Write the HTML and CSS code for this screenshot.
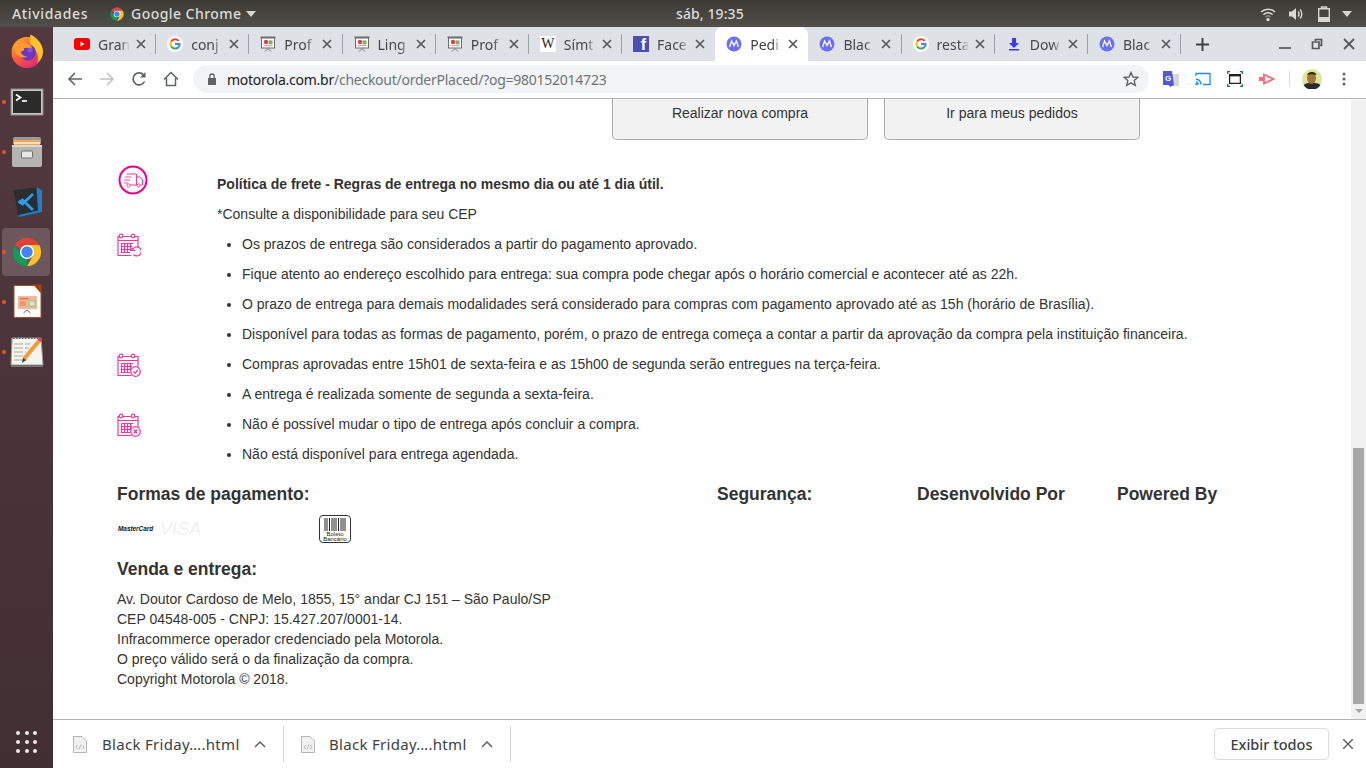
FILE: index.html
```html
<!DOCTYPE html>
<html lang="pt-BR">
<head>
<meta charset="utf-8">
<title>Pedido</title>
<link rel="stylesheet" href="styles.css">
</head>
<body>
<svg class="defs" width="0" height="0">
  <defs>
    <symbol id="chrome" viewBox="0 0 48 48">
      <path fill="#db4437" d="M24 24 6.7 14A20 20 0 0 1 41.3 14H24Z"/>
      <path fill="#0f9d58" d="M24 44A20 20 0 0 1 6.7 14L15.3 29 24 24l-.1 0L24 44Z"/>
      <path fill="#fbc02d" d="M41.3 14A20 20 0 0 1 24 44L32.7 29 24 24V14Z"/>
      <circle cx="24" cy="24" r="10" fill="#fff"/>
      <circle cx="24" cy="24" r="8" fill="#4285f4"/>
    </symbol>
    <symbol id="moto" viewBox="0 0 16 16">
      <circle cx="8" cy="8" r="7.5" fill="#6c6ff2"/>
      <path fill="none" stroke="#fff" stroke-width="1.300" d="M3.600 11 5.600 5 8 9.600 10.400 5 12.400 11"/>
    </symbol>
    <symbol id="google" viewBox="0 0 16 16">
      <circle cx="8" cy="8" r="8" fill="#fff"/>
      <path fill="none" stroke="#ea4335" stroke-width="2" d="M11.600 4.900A4.600 4.600 0 0 0 4.200 5.600"/>
      <path fill="none" stroke="#fbbc05" stroke-width="2" d="M4.200 5.600a4.600 4.600 0 0 0 0 4.800"/>
      <path fill="none" stroke="#34a853" stroke-width="2" d="M4.200 10.400a4.600 4.600 0 0 0 7.400.6"/>
      <path fill="none" stroke="#4285f4" stroke-width="2" d="M8 8h4.600a4.600 4.600 0 0 1-1 3"/>
    </symbol>
    <symbol id="slide" viewBox="0 0 16 16">
      <rect x="0.500" y="0.500" width="15" height="1.600" fill="#6a6a6a"/>
      <rect x="1.500" y="2" width="13" height="10" fill="#fff" stroke="#6a6a6a"/>
      <circle cx="6" cy="6" r="2.200" fill="#d9434e"/>
      <rect x="8.500" y="4.400" width="4" height="4" fill="#7fb069"/>
      <rect x="3.500" y="9.200" width="9" height="1" fill="#e88d8d"/>
      <path fill="none" stroke="#777" d="M5 15.500 8 12.500 11 15.500"/>
    </symbol>
    <symbol id="close" viewBox="0 0 10 10">
      <path fill="none" stroke="currentColor" stroke-width="1.700" d="M1 1 9 9M9 1 1 9"/>
    </symbol>
    <symbol id="cal" viewBox="0 0 24 24">
      <path fill="none" stroke="#f0389c" stroke-width="1.200" d="M2.500 3.500H1V22.500H14M6 3.500H14M18 3.500H21V14M1 7.500H21"/>
      <circle cx="4" cy="3" r="1.800" fill="#fff" stroke="#f0389c" stroke-width="1.200"/>
      <circle cx="16" cy="3" r="1.800" fill="#fff" stroke="#f0389c" stroke-width="1.200"/>
      <path fill="none" stroke="#f0389c" stroke-width="1.200" d="M4.500 10.500H16M4.500 13.500H15M4.500 16.500H13M4.500 19.500H13M4.500 10.500V20M7.500 10.500V20M10.500 10.500V20M13.500 10.500V18"/>
    </symbol>
  </defs>
</svg>

<div class="desktop">
  <header class="topbar">
    <div class="topbar-left">
      <span class="gnome-label gnome-activities">Atividades</span>
      <svg class="top-chrome"><use href="#chrome"/></svg>
      <span class="gnome-label">Google Chrome</span>
      <span class="top-caret"></span>
    </div>
    <div class="clock">sáb, 19:35</div>
    <div class="tray">
      <svg class="tray-icon" viewBox="0 0 16 16"><path fill="none" stroke="#d8d6d0" stroke-width="1.500" d="M1 6a10 10 0 0 1 14 0M3.400 8.600a6.600 6.600 0 0 1 9.200 0"/><path fill="none" stroke="#8d8b85" stroke-width="1.500" d="M5.600 11a3.400 3.400 0 0 1 4.800 0"/><circle cx="8" cy="13.600" r="1.600" fill="#e6e4de"/></svg>
      <svg class="tray-icon" viewBox="0 0 16 16"><path fill="#d8d6d0" d="M1 5.500H4L8 2V14L4 10.500H1Z"/><path fill="none" stroke="#d8d6d0" stroke-width="1.400" d="M10 5.500a3.500 3.500 0 0 1 0 5M12 3.500a6.500 6.500 0 0 1 0 9"/></svg>
      <svg class="tray-icon" viewBox="0 0 16 16"><path fill="none" stroke="#d8d6d0" stroke-width="1.400" d="M2.700 2.700H13.300V15.300H2.700ZM5.500 2.500V1H10.500V2.500"/><rect x="2.700" y="11" width="10.600" height="4.300" fill="#d8d6d0"/></svg>
      <span class="top-caret"></span>
    </div>
  </header>

  <div class="shell">
    <nav class="dock">
      <div class="dock-item">
        <svg class="dock-icon" viewBox="0 0 36 36">
          <defs>
            <linearGradient id="ff" x1=".1" y1=".1" x2=".7" y2="1"><stop offset="0" stop-color="#ffa62e"/><stop offset=".5" stop-color="#ff5a3c"/><stop offset="1" stop-color="#db2a78"/></linearGradient>
          </defs>
          <circle cx="18" cy="18.500" r="15.500" fill="url(#ff)"/>
          <path fill="#ffc22f" d="M21.500 .5c6 3 12.500 9 12.500 17 0 5-2.500 9-6 11.500 2.500-6 .5-12-5-15-2-4-3-9-1.500-13.500Z"/>
          <circle cx="19" cy="18.500" r="8" fill="#6d37bd"/>
          <path fill="#ff9a2e" d="M5 11c4-3 11-3 15-.5 2 1 3 2.500 3 3.500h-8c1 2-1 3.500-3.500 3.500 1 3 4 5.500 7.500 5-4 2.500-11 .5-13-5-1-2.500-1.500-4.500-1-6.500Z"/>
          <circle cx="21" cy="16" r="2.500" fill="#8b53d6"/>
        </svg>
      </div>
      <div class="dock-item dock-run">
        <svg class="dock-icon" viewBox="0 0 36 36">
          <rect x="2" y="5" width="32" height="26" fill="#c9c9c4" stroke="#8a8a86"/>
          <rect x="4" y="7" width="28" height="22" fill="#2b2b2b"/>
          <path fill="none" stroke="#fff" stroke-width="1.700" d="M7 10.500 11.500 13.500 7 16.500"/>
          <path stroke="#fff" stroke-width="1.700" d="M13 17H18"/>
        </svg>
      </div>
      <div class="dock-item dock-run">
        <svg class="dock-icon" viewBox="0 0 36 36">
          <path fill="#9a9a96" d="M4 5Q4 3 6 3H30Q32 3 32 5V10H4Z"/>
          <rect x="5" y="6" width="26" height="6" fill="#f2a65a"/>
          <rect x="5" y="8" width="26" height="2" fill="#f7dcb5"/>
          <rect x="3" y="11" width="30" height="22" rx="2" fill="#b4b4b0"/>
          <rect x="3" y="11" width="30" height="2" fill="#d7d7d3"/>
          <rect x="12.500" y="17" width="11" height="7" rx="1" fill="#e6e6e3" stroke="#6f6f6c"/>
        </svg>
      </div>
      <div class="dock-item">
        <svg class="dock-icon" viewBox="0 0 36 36">
          <path fill="#2b2c30" d="M4.500 6 28.500 3.500 32 28 9.500 33Z"/>
          <path fill="#1e7fd0" d="M27.500 3 33 6.500V28L9.500 33 10 31 29 26.500Z"/>
          <path fill="none" stroke="#2a9fee" stroke-width="2.600" d="M24 10 13.500 20 9.500 17M24 26 13.500 16 9.500 19"/>
        </svg>
      </div>
      <div class="dock-item dock-run dock-active">
        <svg class="dock-icon dock-chrome"><use href="#chrome"/></svg>
      </div>
      <div class="dock-item dock-run">
        <svg class="dock-icon" viewBox="0 0 36 36">
          <path fill="#fff" stroke="#a4502a" d="M5 1.500H26L32 8V33.500H5Z"/>
          <path fill="#a4420f" d="M24 0.500H32.500V10Z"/>
          <rect x="9" y="12" width="19" height="13" fill="#f1b79a"/>
          <rect x="11" y="14" width="9" height="1.400" fill="#e5703b"/>
          <rect x="20" y="17" width="6" height="5" fill="#d5e9c9" stroke="#7eaf67" stroke-width=".6"/>
          <rect x="11" y="17" width="6" height="5" fill="#ea9873"/>
          <path fill="none" stroke="#666" d="M14.500 29 18 26 21.500 29"/>
        </svg>
      </div>
      <div class="dock-item dock-run">
        <svg class="dock-icon" viewBox="0 0 36 36">
          <path fill="#f4f4ef" stroke="#9a9a92" d="M3 4H32L34 31H2Z"/>
          <path fill="#74746e" d="M2 31H34V33H2Z"/>
          <path stroke="#6a6a66" stroke-width="2" stroke-dasharray="1.500 1.500" d="M4 4H30"/>
          <path stroke="#a9a9a2" stroke-width="1.200" stroke-dasharray="9 2" d="M5 10H21M5 14H20M5 18H17M5 22H14M5 26H18"/>
          <path stroke="#f49d36" stroke-width="4" d="M15 25 30 7"/>
          <path fill="#333" d="M13 29 14 24 17 26Z"/>
          <path stroke="#e23d4b" stroke-width="4" d="M30 7 32 4.500"/>
        </svg>
      </div>
      <div class="dock-apps">
        <span class="app-dot"></span><span class="app-dot"></span><span class="app-dot"></span>
        <span class="app-dot"></span><span class="app-dot"></span><span class="app-dot"></span>
        <span class="app-dot"></span><span class="app-dot"></span><span class="app-dot"></span>
      </div>
    </nav>

    <main class="browser">
      <div class="tabstrip">
        <div class="tab">
          <svg class="favicon" viewBox="0 0 16 16"><rect y="2" width="16" height="12" rx="3" fill="#f00"/><path fill="#fff" d="M6.500 5.500 10.500 8 6.500 10.500Z"/></svg>
          <span class="tab-title">Gran</span><svg class="tab-x"><use href="#close"/></svg>
        </div>
        <div class="tab">
          <svg class="favicon"><use href="#google"/></svg>
          <span class="tab-title">conj</span><svg class="tab-x"><use href="#close"/></svg>
        </div>
        <div class="tab">
          <svg class="favicon"><use href="#slide"/></svg>
          <span class="tab-title">Prof</span><svg class="tab-x"><use href="#close"/></svg>
        </div>
        <div class="tab">
          <svg class="favicon"><use href="#slide"/></svg>
          <span class="tab-title">Ling</span><svg class="tab-x"><use href="#close"/></svg>
        </div>
        <div class="tab">
          <svg class="favicon"><use href="#slide"/></svg>
          <span class="tab-title">Prof</span><svg class="tab-x"><use href="#close"/></svg>
        </div>
        <div class="tab">
          <span class="favicon wiki">W</span>
          <span class="tab-title">Símt</span><svg class="tab-x"><use href="#close"/></svg>
        </div>
        <div class="tab tab-before-active">
          <span class="favicon fb">f</span>
          <span class="tab-title">Face</span><svg class="tab-x"><use href="#close"/></svg>
        </div>
        <div class="tab tab-active">
          <svg class="favicon"><use href="#moto"/></svg>
          <span class="tab-title">Pedi</span><svg class="tab-x"><use href="#close"/></svg>
        </div>
        <div class="tab">
          <svg class="favicon"><use href="#moto"/></svg>
          <span class="tab-title">Blac</span><svg class="tab-x"><use href="#close"/></svg>
        </div>
        <div class="tab">
          <svg class="favicon"><use href="#google"/></svg>
          <span class="tab-title">resta</span><svg class="tab-x"><use href="#close"/></svg>
        </div>
        <div class="tab">
          <svg class="favicon" viewBox="0 0 16 16"><path fill="#3b3bf0" d="M6 2H10V7H13L8 12 3 7H6ZM3 13H13V14.500H3Z"/></svg>
          <span class="tab-title">Dow</span><svg class="tab-x"><use href="#close"/></svg>
        </div>
        <div class="tab">
          <svg class="favicon"><use href="#moto"/></svg>
          <span class="tab-title">Blac</span><svg class="tab-x"><use href="#close"/></svg>
        </div>
        <svg class="new-tab" viewBox="0 0 12 12"><path stroke="#3c4043" stroke-width="1.800" d="M6 0V12M0 6H12"/></svg>
        <div class="window-btns">
          <svg class="win-btn" viewBox="0 0 12 12"><path stroke="#6a6c70" stroke-width="2" d="M0 10H12"/></svg>
          <svg class="win-btn" viewBox="0 0 12 12"><path fill="none" stroke="#55575b" stroke-width="1.700" d="M4.500 3V1.500H10.500V7.500H9M1.500 4H8V10.500H1.500Z"/></svg>
          <svg class="win-btn" viewBox="0 0 12 12"><path stroke="#55575b" stroke-width="1.800" d="M1 1 11 11M11 1 1 11"/></svg>
        </div>
      </div>

      <div class="toolbar">
        <svg class="nav-icon" viewBox="0 0 16 16"><path fill="none" stroke="#5f6368" stroke-width="1.600" d="M15 8H2M8 2 2 8 8 14"/></svg>
        <svg class="nav-icon" viewBox="0 0 16 16"><path fill="none" stroke="#bfc1c4" stroke-width="1.600" d="M1 8H14M8 2 14 8 8 14"/></svg>
        <svg class="nav-icon" viewBox="0 0 16 16"><path fill="none" stroke="#5f6368" stroke-width="1.700" d="M13.500 10.500A6 6 0 1 1 13 4.500"/><path fill="#5f6368" d="M14.500 1V6.500H9Z"/></svg>
        <svg class="nav-icon" viewBox="0 0 16 16"><path fill="none" stroke="#5f6368" stroke-width="1.500" d="M1 8.500 8 1.500 15 8.500M3.500 7V14.500H12.500V7"/></svg>
        <div class="omnibox">
          <svg class="lock" viewBox="0 0 10 12"><path fill="#5f6368" d="M1 5H9V12H1Z"/><path fill="none" stroke="#5f6368" stroke-width="1.300" d="M2.800 5V3.200a2.200 2.200 0 0 1 4.400 0V5"/></svg>
          <span class="url"><span class="url-host">motorola.com.br</span>/checkout/orderPlaced/?og=980152014723</span>
          <svg class="star" viewBox="0 0 16 16"><path fill="none" stroke="#5f6368" stroke-width="1.400" d="M8 1.500 10 6 14.800 6.400 11.200 9.600 12.300 14.400 8 11.800 3.700 14.400 4.800 9.600 1.200 6.400 6 6Z"/></svg>
        </div>
        <div class="extensions">
          <svg class="ext" viewBox="0 0 16 16"><rect x="5" y="3" width="11" height="12" fill="#d5d7da"/><path fill="#4f5bd5" d="M0 0H9L11 14 7 16 6 14H0Z"/><text class="ext-g" x="2" y="10">G</text></svg>
          <svg class="ext" viewBox="0 0 16 16"><path fill="none" stroke="#1a8cff" stroke-width="1.300" d="M1 5V2.500H15V13.500H8M1 8a6 6 0 0 1 5 5.500M1 10.500a3.500 3.500 0 0 1 2.500 3"/><circle cx="1.500" cy="13" r="1.200" fill="#1a8cff"/></svg>
          <svg class="ext" viewBox="0 0 16 16"><path fill="none" stroke="#0b8043" stroke-width="1.300" d="M.7 3V.7H3M13 .7H15.300V3M.7 13V15.300H3M13 15.300H15.300V13"/><path fill="none" stroke="#202124" stroke-width="1.300" d="M2.600 3.600H13.400V12.400H2.600Z"/><path stroke="#202124" stroke-width="1.800" d="M2.600 4.500H13.400"/></svg>
          <svg class="ext" viewBox="0 0 16 16"><path fill="none" stroke="#fb6b78" stroke-width="1.800" d="M5 3.500 14.500 8 5 12.500Z"/><rect x="0" y="6" width="6" height="4" fill="#fb6b78"/></svg>
          <span class="ext-sep"></span>
          <svg class="avatar" viewBox="0 0 20 20"><circle cx="10" cy="10" r="10" fill="#dbe69a"/><path fill="#2a2a33" d="M1.500 16c3-3 14-3 17 0a10 10 0 0 1-17 0Z"/><ellipse cx="9.500" cy="9" rx="4.500" ry="6" fill="#a5733f"/><path fill="#33251a" d="M5 6c1-4 9-4 9.500 0-3-1-6.500-1-9.500 0Z"/></svg>
          <svg class="menu-dots" viewBox="0 0 4 14"><circle cx="2" cy="2" r="1.500" fill="#5f6368"/><circle cx="2" cy="7" r="1.500" fill="#5f6368"/><circle cx="2" cy="12" r="1.500" fill="#5f6368"/></svg>
        </div>
      </div>

      <div class="page">
        <div class="content">
          <div class="actions">
            <button class="action-btn">Realizar nova compra</button>
            <button class="action-btn">Ir para meus pedidos</button>
          </div>

          <section class="policy">
            <div class="policy-icons">
              <svg class="truck" viewBox="0 0 30 30">
                <circle cx="15" cy="15" r="13.500" fill="none" stroke="#ec008c" stroke-width="2"/>
                <path fill="none" stroke="#ee3d9c" d="M8.500 9H18.500V20H12M18.500 12H22L24.500 15V20H22.500M18.500 20H19"/>
                <circle cx="10.500" cy="20.500" r="1.600" fill="#fff" stroke="#ee3d9c"/>
                <circle cx="20.500" cy="20.500" r="1.600" fill="#fff" stroke="#ee3d9c"/>
                <path stroke="#f58cc4" stroke-width="1.400" d="M7 12H13M6 15H12M6 18H10"/>
              </svg>
              <svg class="cal cal-refresh" viewBox="0 0 24 24">
                <use href="#cal"/>
                <path fill="#fff" stroke="#f0389c" stroke-width="1.200" d="M15.500 17a4.500 4.500 0 1 1 1 4.500"/>
                <path fill="none" stroke="#f0389c" stroke-width="1.200" d="M15 14.500V17.500H18"/>
              </svg>
              <svg class="cal cal-check" viewBox="0 0 24 24">
                <use href="#cal"/>
                <circle cx="18.500" cy="18.500" r="4.800" fill="#fff" stroke="#f0389c" stroke-width="1.200"/>
                <path fill="none" stroke="#f0389c" stroke-width="1.300" d="M16.300 18.500 18 20.200 20.800 17"/>
              </svg>
              <svg class="cal cal-cancel" viewBox="0 0 24 24">
                <use href="#cal"/>
                <circle cx="18.500" cy="18.500" r="4.800" fill="#fff" stroke="#f0389c" stroke-width="1.200"/>
                <path fill="none" stroke="#f0389c" stroke-width="1.400" d="M16.800 16.800 20.200 20.200M20.200 16.800 16.800 20.200"/>
              </svg>
            </div>
            <div class="policy-text">
              <p class="policy-line"><strong>Política de frete - Regras de entrega no mesmo dia ou até 1 dia útil.</strong></p>
              <p class="policy-line">*Consulte a disponibilidade para seu CEP</p>
              <ul class="policy-list">
                <li>Os prazos de entrega são considerados a partir do pagamento aprovado.</li>
                <li>Fique atento ao endereço escolhido para entrega: sua compra pode chegar após o horário comercial e acontecer até as 22h.</li>
                <li>O prazo de entrega para demais modalidades será considerado para compras com pagamento aprovado até as 15h (horário de Brasília).</li>
                <li>Disponível para todas as formas de pagamento, porém, o prazo de entrega começa a contar a partir da aprovação da compra pela instituição financeira.</li>
                <li>Compras aprovadas entre 15h01 de sexta-feira e as 15h00 de segunda serão entregues na terça-feira.</li>
                <li>A entrega é realizada somente de segunda a sexta-feira.</li>
                <li>Não é possível mudar o tipo de entrega após concluir a compra.</li>
                <li>Não está disponível para entrega agendada.</li>
              </ul>
            </div>
          </section>

          <section class="footer-cols">
            <h4 class="footer-head">Formas de pagamento:</h4>
            <h4 class="footer-head">Segurança:</h4>
            <h4 class="footer-head">Desenvolvido Por</h4>
            <h4 class="footer-head">Powered By</h4>
          </section>
          <div class="pay-logos">
            <span class="mc">MasterCard</span>
            <span class="visa">VISA</span>
            <svg class="boleto" viewBox="0 0 32 28">
              <rect x=".5" y=".5" width="31" height="27" rx="3.500" fill="#fff" stroke="#333"/>
              <path stroke="#222" stroke-width="1" d="M6 3V16M8 3V16M10.500 3V16M13 3V16M15 3V16M17 3V16M19.500 3V16M22 3V16M24 3V16M26 3V16"/>
              <text class="boleto-text" x="16" y="20.800">Boleto</text>
              <text class="boleto-text" x="16" y="26">Bancário</text>
            </svg>
          </div>
          <h4 class="footer-head venda">Venda e entrega:</h4>
          <div class="address">
            <div>Av. Doutor Cardoso de Melo, 1855, 15° andar CJ 151 – São Paulo/SP</div>
            <div>CEP 04548-005 - CNPJ: 15.427.207/0001-14.</div>
            <div>Infracommerce operador credenciado pela Motorola.</div>
            <div>O preço válido será o da finalização da compra.</div>
            <div>Copyright Motorola © 2018.</div>
          </div>
        </div>
        <div class="scrollbar">
          <div class="scroll-thumb"></div>
          <span class="scroll-arrow"></span>
        </div>
      </div>

      <div class="downloads">
        <div class="dl-item">
          <svg class="dl-file" viewBox="0 0 14 17"><path fill="#f1f1f1" stroke="#b5b5b5" d="M.5.500H9L13.500 5V16.500H.5Z"/><path fill="none" stroke="#a8a8a8" stroke-width=".8" d="M4.500 9 3 11 4.500 13M9.500 9 11 11 9.500 13M8 8.500 6 13.500"/></svg>
          <span class="dl-name">Black Friday….html</span>
          <svg class="dl-caret" viewBox="0 0 12 7"><path fill="none" stroke="#5f6368" stroke-width="1.500" d="M1 6 6 1 11 6"/></svg>
        </div>
        <div class="dl-item">
          <svg class="dl-file" viewBox="0 0 14 17"><path fill="#f1f1f1" stroke="#b5b5b5" d="M.5.500H9L13.500 5V16.500H.5Z"/><path fill="none" stroke="#a8a8a8" stroke-width=".8" d="M4.500 9 3 11 4.500 13M9.500 9 11 11 9.500 13M8 8.500 6 13.500"/></svg>
          <span class="dl-name">Black Friday….html</span>
          <svg class="dl-caret" viewBox="0 0 12 7"><path fill="none" stroke="#5f6368" stroke-width="1.500" d="M1 6 6 1 11 6"/></svg>
        </div>
        <div class="dl-actions">
          <button class="show-all">Exibir todos</button>
          <svg class="dl-close" viewBox="0 0 10 10"><path fill="none" stroke="#5f6368" stroke-width="1.500" d="M0 0 10 10M10 0 0 10"/></svg>
        </div>
      </div>
    </main>
  </div>
</div>
</body>
</html>
```

FILE: styles.css
```css
* { box-sizing: border-box; }
html, body { margin: 0; height: 100%; overflow: hidden; }
body { font-family: "Liberation Sans", Arial, sans-serif; color: #333; background: #fff; }
.defs { position: absolute; }

.desktop { width: 1366px; height: 768px; display: grid; grid-template-rows: 27px 741px; }

/* GNOME top bar */
.topbar {
  display: grid; grid-template-columns: 676px auto 1fr; align-items: center;
  background: linear-gradient(#3b3a36, #514f48);
  color: #dedcd6; font-family: "Noto Sans", sans-serif; font-size: 14px;
}
.topbar-left { display: flex; align-items: center; padding-left: 12px; }
.gnome-label { font-weight: 500; letter-spacing: .45px; white-space: nowrap; }
.gnome-activities { width: 76px; letter-spacing: .65px; }
.top-chrome { width: 16px; height: 16px; margin: 0 6px 0 21px; }
.top-caret { width: 0; height: 0; border: 5.5px solid transparent; border-top: 6px solid #d8d6d0; border-bottom: 0; margin-left: 5px; }
.clock { font-weight: 500; letter-spacing: .1px; }
.tray { display: flex; align-items: center; justify-content: flex-end; padding-right: 14px; gap: 12px; }
.tray-icon { width: 16px; height: 16px; }
.tray .top-caret { margin-left: -2px; }

/* Dock */
.shell { display: flex; min-height: 0; }
.dock {
  position: relative; width: 53px; flex: none;
  background: linear-gradient(#53393e, #412f34);
}
.dock-item { position: relative; height: 50px; display: flex; align-items: center; justify-content: center; }
.dock-icon { width: 36px; height: 36px; display: block; }
.dock-chrome { width: 34px; height: 34px; }
.dock-run::before {
  content: ""; position: absolute; left: 2px; top: 23px;
  width: 4px; height: 4px; border-radius: 50%; background: #e9541f; z-index: 2;
}
.dock-active::after {
  content: ""; position: absolute; left: 2px; top: 1px; width: 48px; height: 48px;
  border-radius: 4px; background: rgba(255,255,255,.17);
}
.dock-active .dock-icon { position: relative; z-index: 1; }
.dock-apps {
  position: absolute; left: 16px; bottom: 15px; width: 21px;
  display: grid; grid-template-columns: repeat(3, 4px); justify-content: space-between; row-gap: 5px;
}
.app-dot { width: 4px; height: 4px; border-radius: 50%; background: #ece9e6; }

/* Browser */
.browser { flex: 1; min-width: 0; display: flex; flex-direction: column; background: #fff; }
.tabstrip {
  height: 34px; flex: none; display: flex; align-items: stretch; padding-left: 10px;
  background: #dee1e6; font-family: "Noto Sans", sans-serif; font-size: 14px; color: #45474b;
}
.tab { position: relative; width: 93.18px; flex: none; display: flex; align-items: center; padding-left: 11px; }
.tab::after {
  content: ""; position: absolute; right: 0; top: 7px; bottom: 7px; width: 1px; background: #9aa0a6;
}
.tab-active { background: #fff; color: #3c4043; border-radius: 8px 8px 0 0; }
.tab-active::after, .tab-before-active::after { display: none; }
.favicon { width: 16px; height: 16px; flex: none; display: block; }
.wiki {
  background: #fff; color: #222; font-family: "Liberation Serif", serif; font-size: 14px;
  line-height: 16px; text-align: center;
}
.fb {
  background: #4a4fb4; color: #fff; font-family: "Liberation Sans", sans-serif; font-weight: 700;
  font-size: 16px; line-height: 18px; text-align: right; padding-right: 3px; overflow: hidden;
}
.tab-title {
  width: 32px; margin-left: 8px; white-space: nowrap; overflow: hidden;
  -webkit-mask-image: linear-gradient(90deg, #000 70%, transparent);
  mask-image: linear-gradient(90deg, #000 70%, transparent);
}
.tab-x { width: 10px; height: 10px; margin-left: 6px; flex: none; color: #55575b; }
.new-tab { width: 13px; height: 13px; align-self: center; margin-left: 15px; flex: none; }
.window-btns { flex: 1; display: flex; align-items: center; justify-content: flex-end; gap: 20px; padding: 0 11px 0 0; }
.win-btn { width: 12px; height: 12px; }

.toolbar {
  height: 38px; flex: none; display: flex; align-items: center; padding: 0 0 1px 14px;
  background: #fff; border-bottom: 1px solid #b5b5b5;
}
.nav-icon { width: 16px; height: 16px; margin-right: 16px; flex: none; }
.omnibox {
  width: 956px; height: 28px; flex: none; margin-left: -2px; border-radius: 14px; background: #f1f3f4;
  display: flex; align-items: center; padding: 0 10px 0 14px;
  font-family: "Noto Sans", sans-serif; font-size: 14px; color: #70757a;
}
.lock { width: 10px; height: 12px; margin-right: 10px; flex: none; }
.url { flex: 1; white-space: nowrap; letter-spacing: -.25px; }
.url-host { color: #202124; }
.star { width: 16px; height: 16px; flex: none; }
.extensions { flex: 1; display: flex; align-items: center; padding-left: 14px; }
.ext { width: 16px; height: 16px; margin-right: 16px; flex: none; }
.ext-g { font-family: "Liberation Sans", sans-serif; font-size: 8px; font-weight: 700; fill: #fff; }
.ext-sep { width: 1px; height: 16px; background: #d8dadd; margin: 0 12px 0 -2px; }
.avatar { width: 20px; height: 20px; flex: none; }
.menu-dots { width: 4px; height: 14px; margin-left: 20px; flex: none; }

/* Page */
.page { flex: 1; min-height: 0; display: flex; }
.content { flex: 1; min-width: 0; overflow: hidden; padding-left: 64px; font-size: 14px; line-height: 20px; color: #333; }
.actions { display: flex; gap: 16px; padding-left: 495px; height: 41px; }
.action-btn {
  width: 256px; height: 41px; padding: 0 0 12px; background: #f2f2f2;
  border: 1px solid #aaa; border-top: 0; border-radius: 0 0 5px 5px;
  font: 14px/20px "Liberation Sans", Arial, sans-serif; color: #333;
}
.policy { display: grid; grid-template-columns: 100px 1fr; }
.policy-icons { display: flex; flex-direction: column; align-items: flex-start; padding-top: 25px; }
.truck { width: 30px; height: 30px; margin-left: 1px; }
.cal { width: 24px; height: 24px; display: block; }
.cal-refresh { margin-top: 38px; }
.cal-check { margin-top: 96px; }
.cal-cancel { margin-top: 36px; }
.policy-text { padding-top: 34px; }
.policy-line { margin: 0 0 10px; }
.policy-list { margin: 0; padding: 0 0 0 25px; }
.policy-list li { margin-bottom: 10px; }
.footer-cols { display: grid; grid-template-columns: 600px 200px 200px 200px; margin-top: 10px; }
.footer-head { margin: 0; font-size: 17.5px; line-height: 20px; font-weight: 700; color: #333; }
.pay-logos { display: flex; align-items: center; height: 28px; margin-top: 11px; padding-left: 1px; }
.mc { width: 42px; font-size: 6.4px; font-weight: 700; font-style: italic; color: #111; white-space: nowrap; line-height: 10px; }
.visa { width: 159px; font-size: 18px; font-style: italic; font-weight: 400; color: #f0f0f0; line-height: 20px; }
.boleto { width: 32px; height: 28px; flex: none; }
.boleto-text { font-family: "Liberation Sans", sans-serif; font-size: 6px; text-anchor: middle; fill: #222; }
.venda { margin-top: 16px; }
.address { margin-top: 10px; }

.scrollbar { position: relative; width: 15px; flex: none; background: #f1f1f1; }
.scroll-thumb { position: absolute; left: 2px; right: 2px; top: 349px; height: 256px; background: #a8a8a8; }
.scroll-arrow {
  position: absolute; left: 4px; bottom: 6px; width: 0; height: 0;
  border: 4px solid transparent; border-top: 4px solid #a3a3a3; border-bottom: 0;
}

/* Downloads */
.downloads {
  height: 49px; flex: none; display: flex; align-items: center; background: #fff;
  border-top: 1px solid #b5b5b5; font-family: "Noto Sans", sans-serif; font-size: 15px; color: #3c4043;
}
.dl-item {
  width: 227px; height: 36px; flex: none; display: flex; align-items: center; padding-left: 17px;
  border-right: 1px solid #d3d5d8;
}
.dl-item:first-child { width: 231px; padding-left: 20px; }
.dl-file { width: 14px; height: 17px; flex: none; }
.dl-name { width: 140px; margin-left: 15px; white-space: nowrap; letter-spacing: .3px; }
.dl-item + .dl-item .dl-name { margin-left: 14px; }
.dl-caret { width: 12px; height: 7px; margin-left: 12px; flex: none; }
.dl-actions { flex: 1; display: flex; align-items: center; justify-content: flex-end; padding-right: 13px; }
.show-all {
  width: 115px; height: 32px; padding: 0; background: #fff; border: 1px solid #dadce0; border-radius: 4px;
  font: 500 14.5px "Noto Sans", sans-serif; color: #3c4043;
}
.dl-close { width: 10px; height: 10px; margin-left: 14px; }
```
